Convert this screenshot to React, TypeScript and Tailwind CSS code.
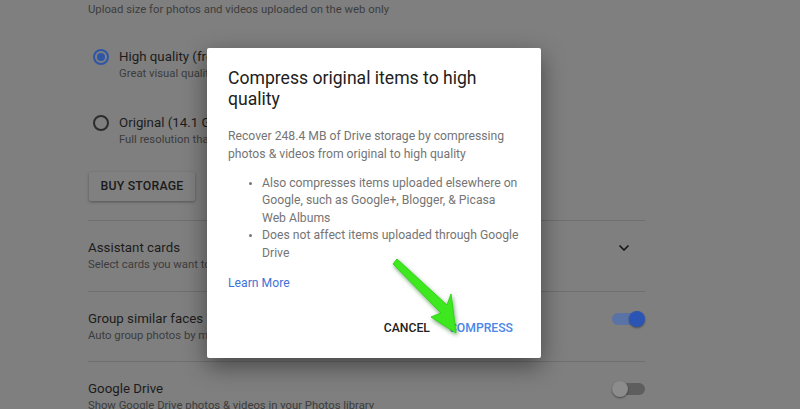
import { ChevronDown } from "lucide-react";

const SettingRow = ({ title, sub, control, tall }: { title: string; sub: string; control?: React.ReactNode; tall?: boolean }) => (
  <div className={`flex ${tall ? "h-[71px]" : "h-[70px]"} items-start justify-between border-t border-[#6f6f6f] pt-[18px]`}>
    <div>
      <div className="text-[13.3px] leading-[18px] text-[#1c1c1c]">{title}</div>
      <div className="text-[11.3px] leading-[16px] text-[#3c3c3c] whitespace-nowrap">{sub}</div>
    </div>
    {control}
  </div>
);

const ToggleOn = () => (
  <div className="relative mt-[1px] h-[16px] w-[33px]">
    <div className="absolute left-0 top-[2px] h-[12px] w-[30px] rounded-full bg-[#5a73a6]" />
    <div className="absolute right-0 top-0 h-[16px] w-[16px] rounded-full bg-[#2a55b4] shadow-[0_1px_2px_rgba(0,0,0,0.4)]" />
  </div>
);

const ToggleOff = () => (
  <div className="relative mt-[1px] h-[16px] w-[33px]">
    <div className="absolute right-0 top-[2px] h-[12px] w-[28px] rounded-full bg-[#5e5e5e]" />
    <div className="absolute left-0 top-0 h-[16px] w-[16px] rounded-full bg-[#8c8c8c] shadow-[0_1px_2px_rgba(0,0,0,0.45)]" />
  </div>
);

export default function App() {
  return (
    <div className="relative h-[409px] w-[800px] overflow-hidden bg-[#7f7f7f] font-['Roboto',sans-serif]">
      {/* dimmed settings page */}
      <div className="w-[645px] pl-[88px] pt-[2px]">
        <div className="text-[11.3px] leading-[16px] text-[#3d3d3d]">
          Upload size for photos and videos uploaded on the web only
        </div>

        <div className="mt-[30px] flex gap-[10px]">
          <div className="ml-[5px] mt-[1px] flex h-[16px] w-[16px] items-center justify-center rounded-full border-2 border-[#2f56a6]">
            <div className="h-[8px] w-[8px] rounded-full bg-[#2f56a6]" />
          </div>
          <div>
            <div className="text-[13.3px] leading-[18px] text-[#1c1c1c]">High quality (free unlimited storage)</div>
            <div className="text-[11.3px] leading-[16px] text-[#3c3c3c]">Great visual quality at reduced file size</div>
          </div>
        </div>

        <div className="mt-[32px] flex gap-[10px]">
          <div className="ml-[5px] mt-[1px] h-[16px] w-[16px] rounded-full border-2 border-[#2c2c2c]" />
          <div>
            <div className="text-[13.3px] leading-[18px] text-[#1c1c1c]">Original (14.1 GB used)</div>
            <div className="text-[11.3px] leading-[16px] text-[#3c3c3c]">Full resolution that counts against your quota</div>
          </div>
        </div>

        <button className="mt-[24px] ml-[1px] h-[29px] w-[106px] rounded-[2px] bg-[#808080] text-[12.3px] font-medium tracking-[0.2px] text-[#1a1a1a] shadow-[0_1px_3px_rgba(0,0,0,0.35)]">
          BUY STORAGE
        </button>

        <div className="mt-[19px]">
          <SettingRow
            tall
            title="Assistant cards"
            sub="Select cards you want to see in the Assistant"
            control={<ChevronDown className="mr-[13px] mt-[1px] h-[16px] w-[16px] text-[#141414]" strokeWidth={2.5} />}
          />
          <SettingRow title="Group similar faces" sub="Auto group photos by matching faces" control={<ToggleOn />} />
          <SettingRow
            title="Google Drive"
            sub="Show Google Drive photos & videos in your Photos library"
            control={<ToggleOff />}
          />
        </div>
      </div>

      {/* dialog */}
      <div className="absolute left-[207px] top-[48px] w-[334px] rounded-[2px] bg-white pb-[12px] pl-[21px] pr-[20px] pt-[20px] shadow-[0_8px_24px_rgba(0,0,0,0.45)]">
        <div className="pr-[30px] text-[17.6px] leading-[21px] text-[#212121]">
          Compress original items to high quality
        </div>
        <div className="mt-[17px] text-[12.2px] leading-[18px] text-[#757575]">
          Recover 248.4 MB of Drive storage by compressing photos &amp; videos from original to high quality
        </div>
        <ul className="mt-[12px] list-disc pl-[34px] text-[12.2px] leading-[17.4px] text-[#757575] marker:text-[10px]">
          <li>Also compresses items uploaded elsewhere on Google, such as Google+, Blogger, &amp; Picasa Web Albums</li>
          <li>Does not affect items uploaded through Google Drive</li>
        </ul>
        <div className="mt-[12px] text-[12.2px] leading-[18px] text-[#3f73d6]">Learn More</div>
        <div className="mt-[18px] flex h-[36px] items-center justify-end gap-[3px]">
          <button className="px-[8px] text-[12.2px] font-medium text-[#212121]">CANCEL</button>
          <button className="px-[8px] text-[12.2px] font-medium text-[#4a86e8]">COMPRESS</button>
        </div>
      </div>

      {/* green annotation arrow */}
      <svg className="absolute left-0 top-0 drop-shadow-[1px_2px_2px_rgba(0,90,0,0.55)]" width="800" height="409">
        <polygon
          points="393,264 397,259 447,305 451,294 456,333 431,317 441,313"
          fill="#3ee81f"
          stroke="#33d418"
          strokeWidth="1"
          strokeLinejoin="round"
        />
      </svg>
    </div>
  );
}
